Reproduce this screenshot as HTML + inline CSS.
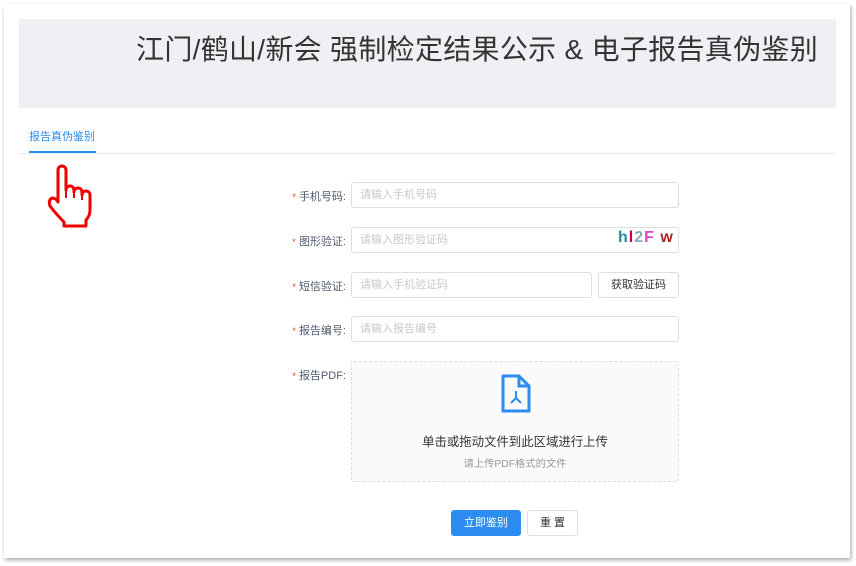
<!DOCTYPE html>
<html><head><meta charset="utf-8"><style>
*{box-sizing:border-box;margin:0;padding:0}
body{width:856px;height:566px;background:#fff;font-family:"Liberation Sans","Noto Sans CJK SC",sans-serif;position:relative;overflow:hidden}
.card{position:absolute;left:4px;top:4px;width:846px;height:554px;background:#fff;box-shadow:1px 2px 4px rgba(0,0,0,.35)}
.hd{position:absolute;left:19px;top:19px;width:817px;height:89px;background:#eef0f3}
.title{position:absolute;right:18px;top:14px;font-size:28px;letter-spacing:0.3px;color:#333;white-space:nowrap;line-height:34px}
.tab{position:absolute;left:29px;top:128px;font-size:11px;color:#2d8cf0}
.tabline{position:absolute;left:29px;top:151px;width:67px;height:2px;background:#2d8cf0}
.sep{position:absolute;left:19px;top:153px;width:817px;height:1px;background:#e8eaec}
.lbl{position:absolute;width:80px;left:266px;text-align:right;font-size:11px;color:#515a6e}
.lbl b{color:#ed4014;font-weight:normal;margin-right:3px;font-size:9px}
.in{position:absolute;left:351px;width:328px;height:26px;border:1px solid #dcdee2;border-radius:3px;font-size:11px;color:#c5c8ce;padding:6px 8px;line-height:13px}
.btn{position:absolute;height:26px;border:1px solid #dcdee2;border-radius:3px;font-size:11px;color:#515a6e;text-align:center;line-height:24px;background:#fff}
.up{position:absolute;left:351px;top:361px;width:328px;height:121px;border:1px dashed #dcdee2;border-radius:3px;background:#fafafa;text-align:center}
</style></head><body>
<div class="card"></div>
<div class="hd"><div class="title">江门/鹤山/新会 强制检定结果公示 &amp; 电子报告真伪鉴别</div></div>
<div class="tab">报告真伪鉴别</div>
<div class="tabline"></div><div class="sep"></div>
<svg style="position:absolute;left:44px;top:162px" width="52" height="68" viewBox="0 0 52 68">
<path d="M14 40 V8 a4 4 0 0 1 8 0 V28 a4 4 0 0 1 8 0 V30 a4 4 0 0 1 8 0 V33 a4 4 0 0 1 8 0 V48 q0 6 -4 10 V64 H20 V60 Q12 52 6 44 Q4 38 8 36 Q12 36 14 40 Z" fill="#fff" stroke="#e00" stroke-width="3" stroke-linejoin="round"/>
<path d="M22 28 V36 M30 30 V36 M38 33 V38" stroke="#e00" stroke-width="2"/>
</svg>
<div class="lbl" style="top:188px"><b>*</b>手机号码:</div>
<div class="in" style="top:182px">请输入手机号码</div>
<div class="lbl" style="top:233px"><b>*</b>图形验证:</div>
<div class="in" style="top:227px">请输入图形验证码</div>
<div style="position:absolute;left:618px;top:229px;font-size:16px;font-weight:bold;letter-spacing:1px"><span style="color:#2a8a9a">h</span><span style="color:#c04">l</span><span style="color:#8ab">2</span><span style="color:#d4c">F</span> <span style="color:#a22">w</span></div>
<div class="lbl" style="top:278px"><b>*</b>短信验证:</div>
<div class="in" style="top:272px;width:241px">请输入手机验证码</div>
<div class="btn" style="left:598px;top:272px;width:81px;color:#333">获取验证码</div>
<div class="lbl" style="top:322px"><b>*</b>报告编号:</div>
<div class="in" style="top:316px">请输入报告编号</div>
<div class="lbl" style="top:367px"><b>*</b>报告PDF:</div>
<div class="up">
<svg style="position:absolute;left:148px;top:12px" width="32" height="40" viewBox="0 0 32 40">
<path d="M3 2 H19 L29 12 V37 H3 Z" fill="none" stroke="#2d8cf0" stroke-width="3" stroke-linejoin="round"/>
<path d="M19 2 V12 H29" fill="none" stroke="#2d8cf0" stroke-width="3"/>
<path d="M16 17 V24 M16 24 L11 29 M16 24 L21 29" stroke="#2d8cf0" stroke-width="2" fill="none"/>
</svg>
<div style="position:absolute;top:70px;width:100%;font-size:12.4px;color:#333">单击或拖动文件到此区域进行上传</div>
<div style="position:absolute;top:93px;width:100%;font-size:10.3px;color:#999">请上传PDF格式的文件</div>
</div>
<div class="btn" style="left:451px;top:510px;width:70px;background:#2d8cf0;border-color:#2d8cf0;color:#fff">立即鉴别</div>
<div class="btn" style="left:527px;top:510px;width:51px;color:#333">重 置</div>
</body></html>
